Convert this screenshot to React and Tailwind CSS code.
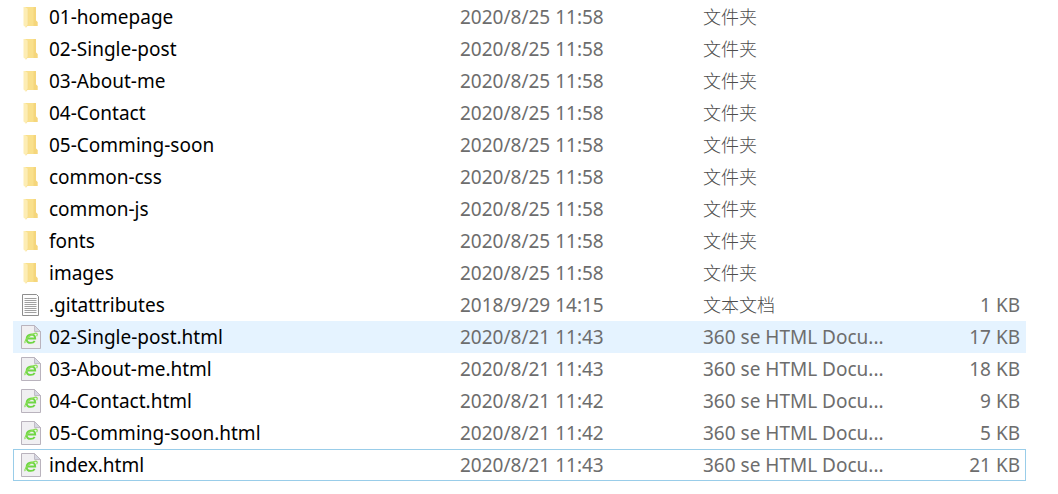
import React from 'react';

const files = [
  { name: '01-homepage', kind: 'folder', modified: '2020/8/25 11:58', type: '文件夹', size: '' },
  { name: '02-Single-post', kind: 'folder', modified: '2020/8/25 11:58', type: '文件夹', size: '' },
  { name: '03-About-me', kind: 'folder', modified: '2020/8/25 11:58', type: '文件夹', size: '' },
  { name: '04-Contact', kind: 'folder', modified: '2020/8/25 11:58', type: '文件夹', size: '' },
  { name: '05-Comming-soon', kind: 'folder', modified: '2020/8/25 11:58', type: '文件夹', size: '' },
  { name: 'common-css', kind: 'folder', modified: '2020/8/25 11:58', type: '文件夹', size: '' },
  { name: 'common-js', kind: 'folder', modified: '2020/8/25 11:58', type: '文件夹', size: '' },
  { name: 'fonts', kind: 'folder', modified: '2020/8/25 11:58', type: '文件夹', size: '' },
  { name: 'images', kind: 'folder', modified: '2020/8/25 11:58', type: '文件夹', size: '' },
  { name: '.gitattributes', kind: 'text', modified: '2018/9/29 14:15', type: '文本文档', size: '1 KB' },
  { name: '02-Single-post.html', kind: 'html', modified: '2020/8/21 11:43', type: '360 se HTML Docu...', size: '17 KB' },
  { name: '03-About-me.html', kind: 'html', modified: '2020/8/21 11:43', type: '360 se HTML Docu...', size: '18 KB' },
  { name: '04-Contact.html', kind: 'html', modified: '2020/8/21 11:42', type: '360 se HTML Docu...', size: '9 KB' },
  { name: '05-Comming-soon.html', kind: 'html', modified: '2020/8/21 11:42', type: '360 se HTML Docu...', size: '5 KB' },
  { name: 'index.html', kind: 'html', modified: '2020/8/21 11:43', type: '360 se HTML Docu...', size: '21 KB' },
];

const hoveredFile = '02-Single-post.html';
const focusedFile = 'index.html';

const FolderIcon = () => (
  <svg className="h-6 w-5 shrink-0" viewBox="0 0 20 24" aria-hidden="true">
    <path d="M4 2h11v13.500l1.500 1.500v4H4z" fill="#f9e08c" />
    <path d="M12.500 2H15v13.500l1.500 1.500v4h-4z" fill="#f5d67c" />
    <path d="M2.500 2H4l3 2v15.500L5 22.500l-2.500-2z" fill="#fdedb4" />
    <path d="M7 4v15.500L5 22.500" fill="none" stroke="#f5da8c" strokeWidth="0.600" />
  </svg>
);

const TextIcon = () => (
  <svg className="h-6 w-5 shrink-0" viewBox="0 0 20 24" aria-hidden="true">
    <path d="M1.500 1.500h14l2 2v19h-16z" fill="#fdfdfd" stroke="#8e8e8e" />
    <path
      d="M3.500 5.500h12M3.500 7.500h12M3.500 9.500h12M3.500 11.500h12M3.500 13.500h12M3.500 15.500h12M3.500 17.500h12M3.500 19.500h12"
      stroke="#a0a0a0"
    />
  </svg>
);

const HtmlIcon = () => (
  <svg className="h-6 w-5 shrink-0" viewBox="0 0 20 24" aria-hidden="true">
    <path d="M0.500 0.500h13l6 6v17h-19z" fill="#f0eff2" stroke="#b9b3bd" />
    <path d="M13.500 0.500v6h6z" fill="#d5d7e2" stroke="#b9b3bd" strokeWidth="0.800" />
    <path
      d="M6.200 13.500h8c0-2.600-1.600-4-4-4-2.700 0-4.600 2-4.600 4.400s1.800 4 4.200 4c1.900 0 3.100-.7 3.900-2"
      fill="none"
      stroke="#6fd644"
      strokeWidth="1.900"
    />
    <path
      d="M4.200 18.200c-1.200-1.600 1.200-5 4.900-7.500 3.200-2.300 6.200-3 7-1.900.4.600.1 1.500-.5 2.500"
      fill="none"
      stroke="#8add55"
      strokeWidth="1.200"
    />
  </svg>
);

const icons = {
  folder: <FolderIcon />,
  text: <TextIcon />,
  html: <HtmlIcon />,
};

// One line of the details view
const FileRow = ({ file }) => {
  let rowStyle = '';
  if (file.name === hoveredFile) rowStyle = 'bg-[#e5f3ff]';
  if (file.name === focusedFile) rowStyle = 'outline outline-1 -outline-offset-1 outline-[#99cde9]';

  return (
    <tr className={`h-8 text-[19px] leading-6 text-[#6d6d6d] ${rowStyle}`}>
      <td className="p-0 pl-2">
        <div className="flex items-center gap-2 text-black">
          {icons[file.kind]}
          <span className="truncate">{file.name}</span>
        </div>
      </td>
      <td className="p-0">{file.modified}</td>
      <td className={file.kind === 'html' ? 'p-0' : 'p-0 text-lg leading-6 font-light text-[#4d4d4d]'}>
        {file.type}
      </td>
      <td className="p-0 pr-1.5 text-right">{file.size}</td>
    </tr>
  );
};

export default function App() {
  return (
    <main className="min-h-screen bg-white pt-px pr-8 pl-[13px] font-['Noto_Sans','Noto_Sans_CJK_SC',sans-serif] whitespace-nowrap">
      <table className="w-full table-fixed border-collapse">
        <colgroup>
          <col />
          <col className="w-[243px]" />
          <col className="w-[223px]" />
          <col className="w-[100px]" />
        </colgroup>
        <tbody>
          {files.map((file) => (
            <FileRow key={file.name} file={file} />
          ))}
        </tbody>
      </table>
    </main>
  );
}
